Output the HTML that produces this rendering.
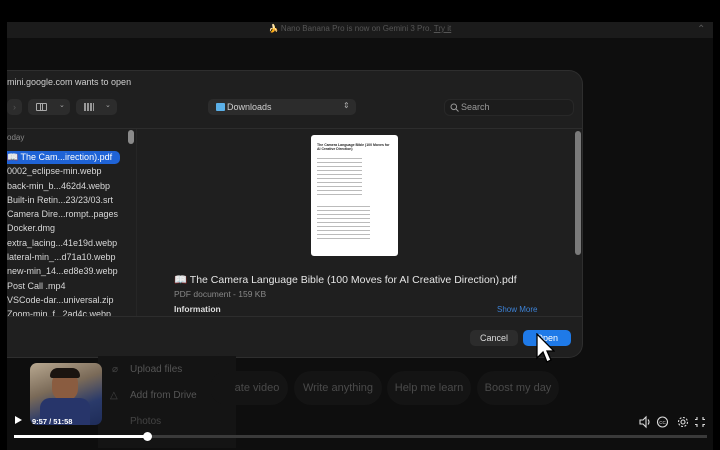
<!DOCTYPE html>
<html><head><meta charset="utf-8"><style>
*{margin:0;padding:0;box-sizing:border-box}
body{width:720px;height:450px;background:#000;position:relative;overflow:hidden;font-family:"Liberation Sans",sans-serif;color:#ddd}
.abs{position:absolute}
.vid{left:7px;top:22px;width:706px;height:428px;background:#0e0e0e}
.strip{left:7px;top:22px;width:706px;height:16px;background:#1b1b1b;font-size:8px;color:#555;text-align:center;line-height:14px}
.dlg{left:7px;top:70px;width:576px;height:288px;background:#1f1f1f;border-radius:0 14px 14px 0;border:1px solid #2e2e2e;border-left:none}
.t{font-size:9.5px;color:#cfcfcf;white-space:nowrap}
.btn{background:#2c2c2c;border-radius:5px}
.list div{height:14.3px;font-size:9px;color:#d8d8d8;white-space:nowrap;line-height:14px;padding-left:0}
.pill{height:34px;border-radius:17px;background:#141414;color:#4a4a4a;font-size:11px;line-height:34px;text-align:center}
</style></head><body>
<div class="abs vid"></div>
<div class="abs strip">🍌 Nano Banana Pro is now on Gemini 3 Pro. <u>Try it</u></div>
<div class="abs" style="left:697px;top:24px;color:#555;font-size:10px">⌃</div>

<div class="abs dlg"></div>
<div class="abs t" style="left:7px;top:77px;font-size:9px">mini.google.com wants to open</div>
<div class="abs btn" style="left:7px;top:99px;width:15px;height:16px;color:#555;font-size:9px;line-height:16px;text-align:center">›</div>
<div class="abs btn" style="left:28px;top:99px;width:42px;height:16px"></div>
<div class="abs" style="left:36px;top:103px;width:11px;height:8px;border:1px solid #aaa;border-radius:1px"></div>
<div class="abs" style="left:40px;top:103px;width:3px;height:8px;border-left:1px solid #aaa;border-right:1px solid #aaa"></div>
<div class="abs" style="left:59px;top:101px;font-size:7px;color:#aaa">⌄</div>
<div class="abs btn" style="left:76px;top:99px;width:41px;height:16px"></div>
<div class="abs" style="left:84px;top:103px;width:10px;height:8px;background:repeating-linear-gradient(90deg,#999 0 2px,#2c2c2c 2px 3px)"></div>
<div class="abs" style="left:105px;top:101px;font-size:7px;color:#aaa">⌄</div>
<div class="abs btn" style="left:208px;top:99px;width:148px;height:16px"></div>
<div class="abs" style="left:216px;top:103px;width:9px;height:8px;background:#5bb0e8;border-radius:1px"></div>
<div class="abs t" style="left:227px;top:102px;font-size:9px">Downloads</div>
<div class="abs" style="left:343px;top:101px;font-size:8px;color:#aaa">⇕</div>
<div class="abs" style="left:444px;top:99px;width:130px;height:17px;border-radius:6px;background:#1c1c1c;border:1px solid #282828"></div>
<svg class="abs" style="left:450px;top:103px" width="9" height="9" viewBox="0 0 9 9"><circle cx="3.8" cy="3.8" r="2.8" fill="none" stroke="#999" stroke-width="1"/><path d="M6 6 L8.5 8.5" stroke="#999" stroke-width="1"/></svg>
<div class="abs" style="left:461px;top:102px;font-size:9px;color:#999">Search</div>
<div class="abs" style="left:7px;top:128px;width:576px;height:1px;background:#2d2d2d"></div>

<div class="abs" style="left:7px;top:133px;font-size:8px;color:#888">oday</div>
<div class="abs" style="left:7px;top:151px;width:113px;height:13px;background:#1f63d6;border-radius:0 5px 5px 0"></div>
<div class="abs list" style="left:7px;top:150px;height:166px;overflow:hidden;width:125px">
<div style="color:#fff">📖 The Cam...irection).pdf</div>
<div>0002_eclipse-min.webp</div>
<div>back-min_b...462d4.webp</div>
<div>Built-in Retin...23/23/03.srt</div>
<div>Camera Dire...rompt..pages</div>
<div>Docker.dmg</div>
<div>extra_lacing...41e19d.webp</div>
<div>lateral-min_...d71a10.webp</div>
<div>new-min_14...ed8e39.webp</div>
<div>Post Call .mp4</div>
<div>VSCode-dar...universal.zip</div>
<div>Zoom-min_f...2ad4c.webp</div>
</div>
<div class="abs" style="left:128px;top:130px;width:6px;height:14px;background:#8a8a8a;border-radius:3px"></div>
<div class="abs" style="left:136px;top:129px;width:1px;height:187px;background:#262626"></div>

<div class="abs" style="left:311px;top:135px;width:87px;height:121px;background:#fff;border-radius:3px;padding:8px 6px">
<div style="font-size:3.5px;color:#222;font-weight:bold;line-height:4px">The Camera Language Bible (100 Moves for AI Creative Direction)</div>
<div style="margin-top:4px;height:40px;background:repeating-linear-gradient(#fff 0 3px,#bbb 3px 4px);width:60%"></div>
<div style="margin-top:8px;height:36px;background:repeating-linear-gradient(#fff 0 3px,#bbb 3px 4px);width:70%"></div>
</div>
<div class="abs" style="left:174px;top:273px;font-size:10.5px;color:#e6e6e6">📖 The Camera Language Bible (100 Moves for AI Creative Direction).pdf</div>
<div class="abs" style="left:174px;top:289px;font-size:8.5px;color:#888">PDF document - 159 KB</div>
<div class="abs" style="left:174px;top:304px;font-size:8.5px;color:#ddd;font-weight:bold">Information</div>
<div class="abs" style="left:497px;top:305px;font-size:8px;color:#3d82d6">Show More</div>
<div class="abs" style="left:575px;top:131px;width:6px;height:124px;background:#7a7a7a;border-radius:3px"></div>
<div class="abs" style="left:7px;top:316px;width:576px;height:1px;background:#2d2d2d"></div>
<div class="abs btn" style="left:470px;top:330px;width:48px;height:16px;font-size:9px;line-height:16px;text-align:center;color:#ddd">Cancel</div>
<div class="abs" style="left:523px;top:330px;width:48px;height:16px;background:#1f7ae8;border-radius:5px;font-size:9px;line-height:16px;text-align:center;color:#fff">Open</div>
<svg class="abs" style="left:535px;top:333px" width="20" height="34" viewBox="0 0 20 34"><path d="M2 1 L2 25 L8 19 L12 29 L16 27 L12 18 L19 18 Z" fill="#fff" stroke="#000" stroke-width="1.3"/></svg>

<div class="abs" style="left:98px;top:356px;width:138px;height:92px;background:#141414"></div>
<div class="abs" style="left:130px;top:364px;font-size:10px;color:#555">Upload files</div>
<div class="abs" style="left:130px;top:390px;font-size:10px;color:#555">Add from Drive</div>
<div class="abs" style="left:130px;top:416px;font-size:10px;color:#444">Photos</div>
<div class="abs" style="left:112px;top:364px;font-size:10px;color:#444">⌀</div>
<div class="abs" style="left:110px;top:390px;font-size:10px;color:#444">△</div>
<div class="abs pill" style="left:210px;top:371px;width:78px;text-indent:16px">ate video</div>
<div class="abs pill" style="left:294px;top:371px;width:88px">Write anything</div>
<div class="abs pill" style="left:387px;top:371px;width:84px">Help me learn</div>
<div class="abs pill" style="left:477px;top:371px;width:82px">Boost my day</div>

<div class="abs" style="left:30px;top:363px;width:72px;height:62px;border-radius:7px;background:linear-gradient(160deg,#b8a890 0%,#7a6a58 40%,#2a3a6a 70%,#1e2c58 100%)"></div>
<div class="abs" style="left:52px;top:371px;width:26px;height:30px;border-radius:12px;background:#8a5c40"></div>
<div class="abs" style="left:50px;top:368px;width:30px;height:10px;border-radius:10px 10px 3px 3px;background:#1a1410"></div>
<div class="abs" style="left:40px;top:398px;width:50px;height:27px;border-radius:10px 10px 0 0;background:#27356a"></div>

<div class="abs" style="left:15px;top:416px;width:0;height:0;border-left:7px solid #fff;border-top:4.5px solid transparent;border-bottom:4.5px solid transparent"></div>
<div class="abs" style="left:32px;top:417px;font-size:7.5px;color:#fff;font-weight:bold">9:57 / 51:58</div>
<svg class="abs" style="left:638px;top:415px" width="72" height="14" viewBox="0 0 72 14" fill="none" stroke="#ddd" stroke-width="1.1">
<path d="M2 5 H5 L8 2 V12 L5 9 H2 Z"/><path d="M10 4.5 Q12 7 10 9.5"/>
<rect x="19.5" y="2" width="10" height="10" rx="5"/><text x="21.3" y="9" font-size="4.5" fill="#ddd" stroke="none" font-family="Liberation Sans">CC</text>
<circle cx="45" cy="7" r="2"/><circle cx="45" cy="7" r="4.5" stroke-dasharray="2 1.5"/>
<path d="M59 2 V4.5 H57 M65 2 V4.5 H67 M59 12 V9.5 H57 M65 12 V9.5 H67"/>
</svg>
<div class="abs" style="left:14px;top:435px;width:693px;height:3px;background:#3a3a3a"></div>
<div class="abs" style="left:14px;top:435px;width:133px;height:3px;background:#fff"></div>
<div class="abs" style="left:143px;top:432px;width:9px;height:9px;border-radius:50%;background:#fff"></div>
</body></html>
